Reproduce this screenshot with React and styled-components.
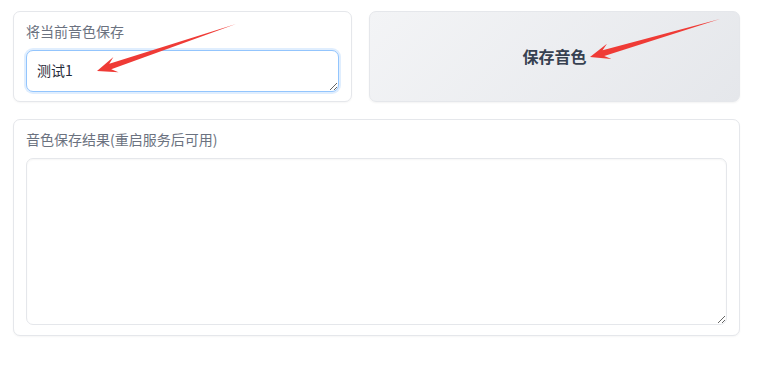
import React from "react";
import styled, { createGlobalStyle } from "styled-components";

const GlobalStyle = createGlobalStyle`
  body {
    margin: 0;
    background: #ffffff;
    font-family: "Noto Sans CJK SC", "Liberation Sans", sans-serif;
  }
`;

const Page = styled.div`
  position: relative;
  width: 758px;
  height: 372px;
  padding: 11px 18px 0 13px;
  box-sizing: border-box;
  display: flex;
  flex-direction: column;
  gap: 17px;
`;

const Row = styled.div`
  display: flex;
  gap: 17px;
  height: 91px;
`;

const Card = styled.div`
  width: ${p => p.w}px;
  height: ${p => p.h}px;
  flex: none;
  display: flex;
  flex-direction: column;
  border: 1px solid #e5e7eb;
  border-radius: 7px;
  background: #fff;
  padding: 9px 12px 0 12px;
  box-sizing: border-box;
  box-shadow: 0 1px 2px rgba(0, 0, 0, 0.04);
`;

const Label = styled.div`
  font-size: 14px;
  line-height: 20px;
  color: #6b7280;
  margin-bottom: 9px;
`;

const Area = styled.textarea`
  display: block;
  width: 100%;
  box-sizing: border-box;
  height: ${p => p.h}px;
  resize: vertical;
  border: 1px solid ${p => (p.focus ? "#93c5fd" : "#e5e7eb")};
  box-shadow: ${p =>
    p.focus ? "0 0 0 2px #e0eefe" : "inset 0 1px 2px rgba(0,0,0,0.04)"};
  border-radius: 7px;
  padding: 10px 10px;
  font-family: "Noto Sans CJK SC", "Liberation Sans", sans-serif;
  font-size: 14px;
  line-height: 18px;
  color: #1f2937;
  outline: none;
  background: #fff;
`;

const SaveButton = styled.button`
  width: 371px;
  flex: none;
  border: 1px solid #e5e7eb;
  border-radius: 7px;
  background: linear-gradient(135deg, #f3f4f6 0%, #e5e7eb 100%);
  font-family: "Noto Sans CJK SC", "Liberation Sans", sans-serif;
  font-size: 16px;
  font-weight: 700;
  color: #374151;
  box-shadow: 0 1px 2px rgba(0, 0, 0, 0.05);
  padding: 0 0 2px 0;
  cursor: pointer;
`;

const Overlay = styled.svg`
  position: absolute;
  left: 0;
  top: 0;
  pointer-events: none;
`;

function Arrow({ x1, y1, x2, y2 }) {
  const dx = x2 - x1;
  const dy = y2 - y1;
  const len = Math.hypot(dx, dy);
  const ux = dx / len;
  const uy = dy / len;
  const nx = -uy;
  const ny = ux;
  const headLen = 20;
  const headW = 8;
  const neckW = 3;
  const bx = x2 - ux * headLen;
  const by = y2 - uy * headLen;
  const nkx = x2 - ux * (headLen - 6);
  const nky = y2 - uy * (headLen - 6);
  const pts = [
    [x1, y1],
    [nkx + nx * neckW, nky + ny * neckW],
    [bx + nx * headW, by + ny * headW],
    [x2, y2],
    [bx - nx * headW, by - ny * headW],
    [nkx - nx * neckW, nky - ny * neckW],
  ]
    .map(p => p.join(","))
    .join(" ");
  return <polygon points={pts} fill="#ef3b36" />;
}

export default function App() {
  return (
    <>
      <GlobalStyle />
      <Page>
        <Row>
          <Card w={339} h={91}>
            <Label>将当前音色保存</Label>
            <Area h={42} focus defaultValue="测试1" />
          </Card>
          <SaveButton>保存音色</SaveButton>
        </Row>
        <Card w={727} h={217}>
          <Label>音色保存结果(重启服务后可用)</Label>
          <Area h={167} />
        </Card>
        <Overlay width="758" height="372">
          <Arrow x1={236} y1={24} x2={97} y2={71} />
          <Arrow x1={720} y1={19} x2={590} y2={57} />
        </Overlay>
      </Page>
    </>
  );
}
